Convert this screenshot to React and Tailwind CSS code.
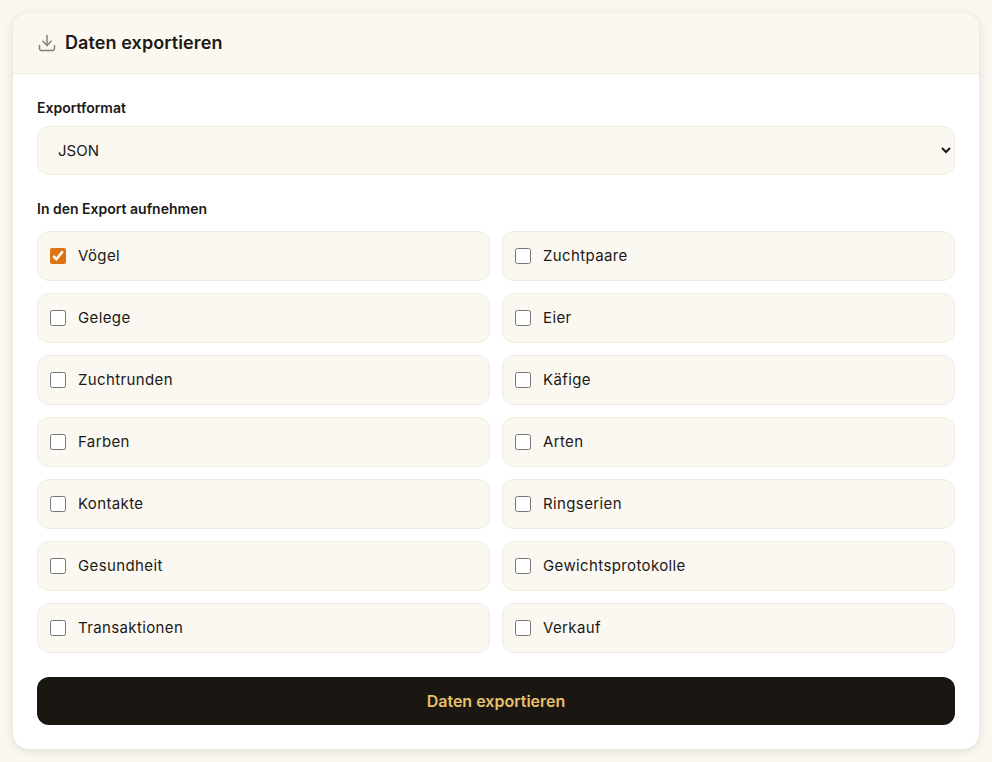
import React from "react";
import { Download } from "lucide-react";

const items = ["Vögel","Zuchtpaare","Gelege","Eier","Zuchtrunden","Käfige","Farben","Arten","Kontakte","Ringserien","Gesundheit","Gewichtsprotokolle","Transaktionen","Verkauf"];

export default function App() {
  return (
    <div className="min-h-[762px] bg-[#faf8f1] px-[13px] pt-[13px] font-['Inter',sans-serif] text-[#1c1917]">
      <div className="w-[966px] overflow-hidden rounded-2xl bg-white shadow-[0_2px_10px_rgba(50,45,30,0.14)]">
        <div className="flex h-[61px] items-center gap-2 border-b border-[#edebdd] bg-[#faf8f1] px-6">
          <Download className="h-[20px] w-[20px] text-[#8a7f6f]" strokeWidth={1.75} />
          <h2 className="text-[18px] font-semibold leading-6 tracking-[0.005em]">Daten exportieren</h2>
        </div>
        <div className="flex flex-col p-6">
          <label className="mb-2 text-[14px] font-semibold leading-5">Exportformat</label>
          <select defaultValue="JSON" className="h-[49px] w-full rounded-xl border border-[#efecdf] bg-[#faf8f1] px-4 text-[15px]">
            <option>JSON</option>
            <option>CSV</option>
          </select>
          <div className="mb-3 mt-6 text-[14px] font-semibold leading-5">In den Export aufnehmen</div>
          <div className="grid grid-cols-2 gap-3">
            {items.map((item, i) => (
              <label key={item} className="flex h-[50px] items-center gap-3 rounded-xl border border-[#efecdf] bg-[#faf8f1] px-3 text-[15px] tracking-[0.025em]">
                <input type="checkbox" defaultChecked={i === 0} className="h-4 w-4 accent-[#dd7414]" />
                <span>{item}</span>
              </label>
            ))}
          </div>
          <button className="mt-6 h-12 w-full rounded-xl bg-[#1a1712] text-[16px] font-semibold text-[#e8c06a]">Daten exportieren</button>
        </div>
      </div>
    </div>
  );
}
